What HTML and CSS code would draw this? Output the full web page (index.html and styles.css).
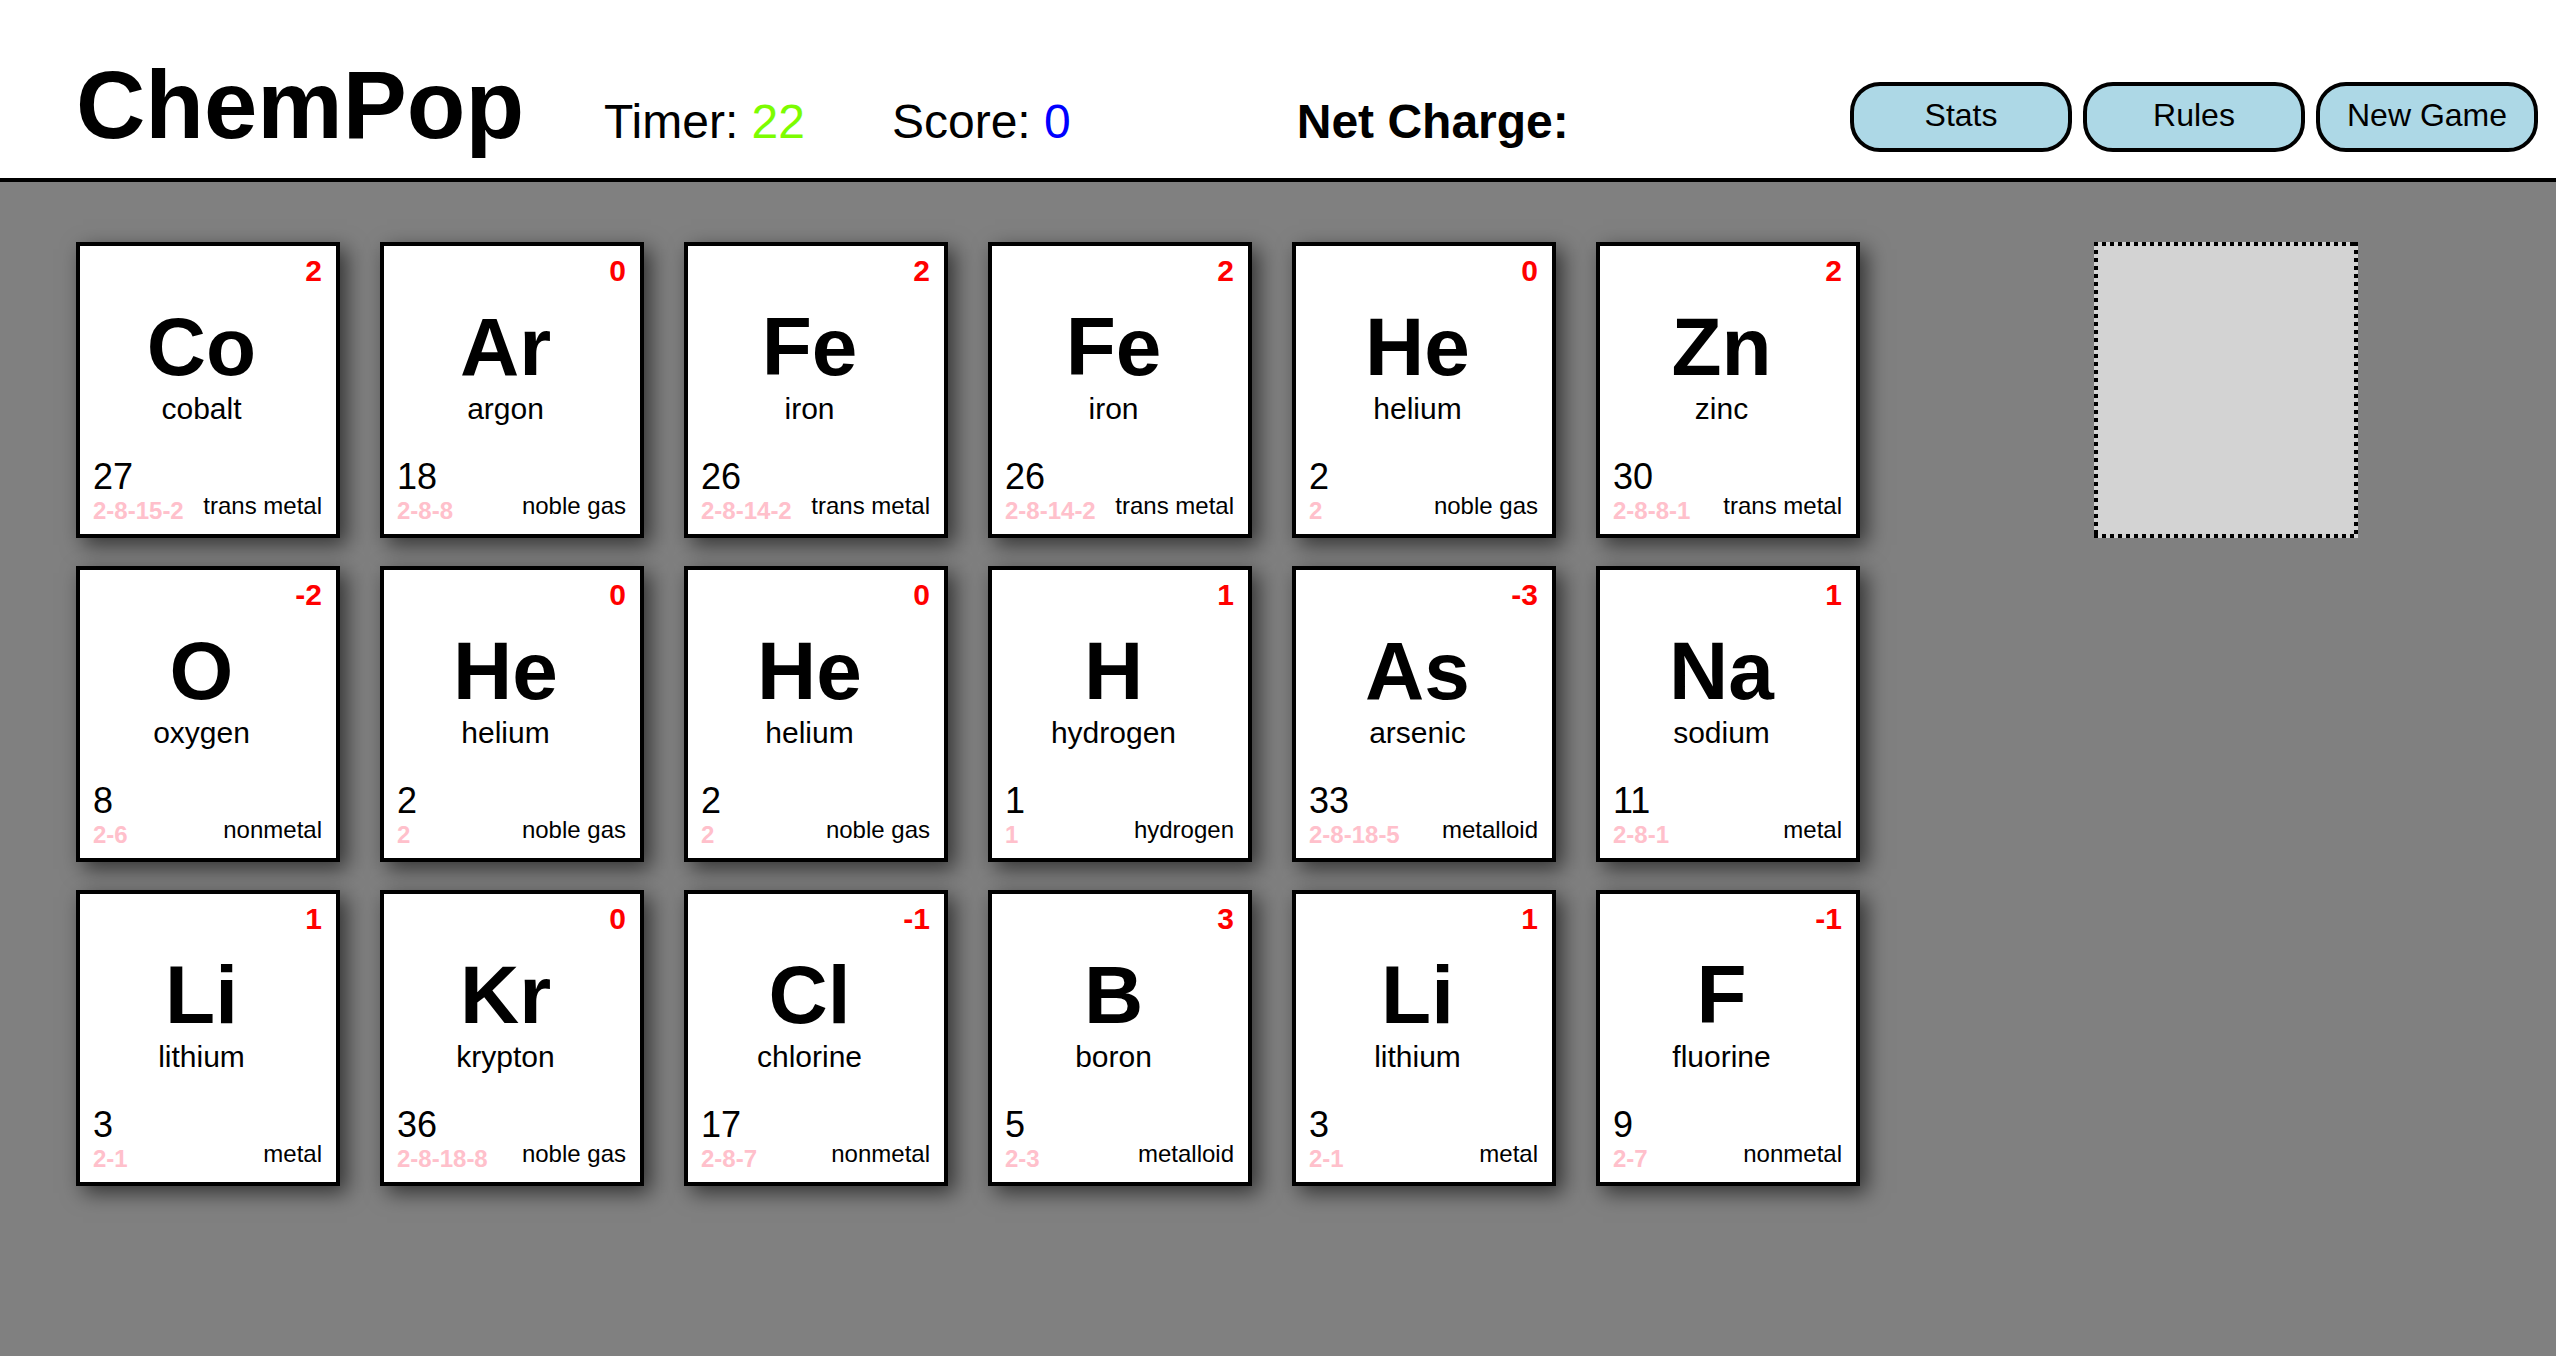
FILE: index.html
```html
<!DOCTYPE html>
<html lang="en">
<head>
<meta charset="utf-8">
<title>ChemPop</title>
<link rel="stylesheet" href="styles.css">
</head>
<body>
<header class="topbar">
  <h1 class="title">ChemPop</h1>
  <div class="stat stat-timer">Timer: <span class="timer-val">22</span></div>
  <div class="stat stat-score">Score: <span class="score-val">0</span></div>
  <div class="stat stat-net">Net Charge:</div>
  <nav class="buttons">
    <button class="btn">Stats</button>
    <button class="btn">Rules</button>
    <button class="btn">New Game</button>
  </nav>
</header>
<main class="board">
  <div class="grid">
    <div class="card"><div class="charge">2</div><div class="center"><div class="symbol">Co</div><div class="name">cobalt</div></div><div class="bottom"><div class="number">27</div><div class="row"><span class="config">2-8-15-2</span><span class="category">trans metal</span></div></div></div>
    <div class="card"><div class="charge">0</div><div class="center"><div class="symbol">Ar</div><div class="name">argon</div></div><div class="bottom"><div class="number">18</div><div class="row"><span class="config">2-8-8</span><span class="category">noble gas</span></div></div></div>
    <div class="card"><div class="charge">2</div><div class="center"><div class="symbol">Fe</div><div class="name">iron</div></div><div class="bottom"><div class="number">26</div><div class="row"><span class="config">2-8-14-2</span><span class="category">trans metal</span></div></div></div>
    <div class="card"><div class="charge">2</div><div class="center"><div class="symbol">Fe</div><div class="name">iron</div></div><div class="bottom"><div class="number">26</div><div class="row"><span class="config">2-8-14-2</span><span class="category">trans metal</span></div></div></div>
    <div class="card"><div class="charge">0</div><div class="center"><div class="symbol">He</div><div class="name">helium</div></div><div class="bottom"><div class="number">2</div><div class="row"><span class="config">2</span><span class="category">noble gas</span></div></div></div>
    <div class="card"><div class="charge">2</div><div class="center"><div class="symbol">Zn</div><div class="name">zinc</div></div><div class="bottom"><div class="number">30</div><div class="row"><span class="config">2-8-8-1</span><span class="category">trans metal</span></div></div></div>

    <div class="card"><div class="charge">-2</div><div class="center"><div class="symbol">O</div><div class="name">oxygen</div></div><div class="bottom"><div class="number">8</div><div class="row"><span class="config">2-6</span><span class="category">nonmetal</span></div></div></div>
    <div class="card"><div class="charge">0</div><div class="center"><div class="symbol">He</div><div class="name">helium</div></div><div class="bottom"><div class="number">2</div><div class="row"><span class="config">2</span><span class="category">noble gas</span></div></div></div>
    <div class="card"><div class="charge">0</div><div class="center"><div class="symbol">He</div><div class="name">helium</div></div><div class="bottom"><div class="number">2</div><div class="row"><span class="config">2</span><span class="category">noble gas</span></div></div></div>
    <div class="card"><div class="charge">1</div><div class="center"><div class="symbol">H</div><div class="name">hydrogen</div></div><div class="bottom"><div class="number">1</div><div class="row"><span class="config">1</span><span class="category">hydrogen</span></div></div></div>
    <div class="card"><div class="charge">-3</div><div class="center"><div class="symbol">As</div><div class="name">arsenic</div></div><div class="bottom"><div class="number">33</div><div class="row"><span class="config">2-8-18-5</span><span class="category">metalloid</span></div></div></div>
    <div class="card"><div class="charge">1</div><div class="center"><div class="symbol">Na</div><div class="name">sodium</div></div><div class="bottom"><div class="number">11</div><div class="row"><span class="config">2-8-1</span><span class="category">metal</span></div></div></div>

    <div class="card"><div class="charge">1</div><div class="center"><div class="symbol">Li</div><div class="name">lithium</div></div><div class="bottom"><div class="number">3</div><div class="row"><span class="config">2-1</span><span class="category">metal</span></div></div></div>
    <div class="card"><div class="charge">0</div><div class="center"><div class="symbol">Kr</div><div class="name">krypton</div></div><div class="bottom"><div class="number">36</div><div class="row"><span class="config">2-8-18-8</span><span class="category">noble gas</span></div></div></div>
    <div class="card"><div class="charge">-1</div><div class="center"><div class="symbol">Cl</div><div class="name">chlorine</div></div><div class="bottom"><div class="number">17</div><div class="row"><span class="config">2-8-7</span><span class="category">nonmetal</span></div></div></div>
    <div class="card"><div class="charge">3</div><div class="center"><div class="symbol">B</div><div class="name">boron</div></div><div class="bottom"><div class="number">5</div><div class="row"><span class="config">2-3</span><span class="category">metalloid</span></div></div></div>
    <div class="card"><div class="charge">1</div><div class="center"><div class="symbol">Li</div><div class="name">lithium</div></div><div class="bottom"><div class="number">3</div><div class="row"><span class="config">2-1</span><span class="category">metal</span></div></div></div>
    <div class="card"><div class="charge">-1</div><div class="center"><div class="symbol">F</div><div class="name">fluorine</div></div><div class="bottom"><div class="number">9</div><div class="row"><span class="config">2-7</span><span class="category">nonmetal</span></div></div></div>
  </div>
  <div class="dropzone"></div>
</main>
</body>
</html>
```

FILE: styles.css
```css
* { box-sizing: border-box; }

html, body {
  margin: 0;
  padding: 0;
}

body {
  background: #808080;
  font-family: "Liberation Sans", Arial, Helvetica, sans-serif;
  color: #000;
  min-height: 1356px;
}

.topbar {
  height: 182px;
  background: #fff;
  border-bottom: 4px solid #000;
  padding: 57px 18px 0 76px;
  display: flex;
  align-items: baseline;
}

.title {
  margin: 0;
  font-size: 96px;
  line-height: 96px;
  font-weight: bold;
}

.stat {
  font-size: 48px;
  line-height: 48px;
  white-space: nowrap;
}

.stat-timer { margin-left: 80px; }
.stat-score { margin-left: 87px; }
.stat-net { margin-left: 226px; font-weight: bold; }

.timer-val { color: #7cfc00; }
.score-val { color: #0000ff; }

.buttons {
  align-self: flex-start;
  margin-top: 25px;
  margin-left: auto;
  display: flex;
  gap: 11px;
}

.btn {
  width: 222px;
  height: 70px;
  border: 4px solid #000;
  border-radius: 30px;
  background: #add8e6;
  font-family: "Liberation Sans", Arial, Helvetica, sans-serif;
  font-size: 32px;
  line-height: 32px;
  color: #000;
  padding: 0 0 4px 0;
}

.board {
  display: flex;
  align-items: flex-start;
  padding: 60px 0 0 76px;
}

.grid {
  display: grid;
  grid-template-columns: repeat(6, 264px);
  column-gap: 40px;
  row-gap: 28px;
}

.card {
  width: 264px;
  height: 296px;
  background: #fff;
  border: 4px solid #000;
  box-shadow: 7px 7px 20px rgba(0, 0, 0, 0.6);
  padding: 10px 14px 11px 13px;
  display: flex;
  flex-direction: column;
}

.charge {
  text-align: right;
  color: #ff0000;
  font-weight: bold;
  font-size: 30px;
  line-height: 30px;
}

.center {
  text-align: center;
  padding-right: 12px;
}

.symbol {
  margin-top: 20px;
  font-size: 82px;
  line-height: 82px;
  font-weight: bold;
}

.name {
  margin-top: 6px;
  font-size: 30px;
  line-height: 30px;
}

.bottom {
  margin-top: auto;
}

.number {
  font-size: 36px;
  line-height: 36px;
  margin-bottom: 4px;
}

.row {
  height: 24px;
  display: flex;
  justify-content: space-between;
  align-items: flex-end;
}

.config {
  color: #ffc0cb;
  font-weight: bold;
  font-size: 24px;
  line-height: 24px;
}

.category {
  font-size: 24px;
  line-height: 24px;
  margin-bottom: 5px;
}

.dropzone {
  width: 264px;
  height: 296px;
  margin-left: 234px;
  background:
    linear-gradient(to right, #000 50%, transparent 50%) top left / 8px 4px repeat-x,
    linear-gradient(to right, #000 50%, transparent 50%) bottom left / 8px 4px repeat-x,
    linear-gradient(to bottom, #000 50%, transparent 50%) top left / 4px 8px repeat-y,
    linear-gradient(to bottom, #000 50%, transparent 50%) top right / 4px 8px repeat-y,
    #d3d3d3;
}
```
